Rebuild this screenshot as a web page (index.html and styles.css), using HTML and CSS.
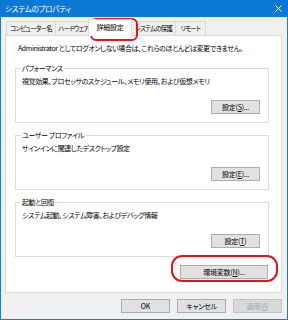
FILE: index.html
```html
<!DOCTYPE html>
<html lang="ja">
<head>
    <meta charset="UTF-8">
    <meta name="viewport" content="width=device-width, initial-scale=1.0">
    <title>システムのプロパティ</title>
    <link rel="stylesheet" href="styles.css">
</head>
<body>
    <div class="window">
        <div class="titlebar">
            <span>システムのプロパティ</span>
            <svg class="close" width="7" height="7" viewBox="0 0 7 7">
                <path d="M0.5 0.5 L6.5 6.5 M6.5 0.5 L0.5 6.5" stroke="#fff" stroke-width="1"/>
            </svg>
        </div>
        <div class="body">
            <div class="tabs">
                <div class="tab tab-name">コンピューター名</div>
                <div class="tab tab-hw">ハードウェア</div>
                <div class="tab tab-adv active">詳細設定</div>
                <div class="tab tab-prot">システムの保護</div>
                <div class="tab tab-remote">リモート</div>
            </div>
            <div class="panel">
                <p class="intro">Administrator としてログオンしない場合は、これらのほとんどは変更できません。</p>

                <div class="group">
                    <div class="group-title">パフォーマンス</div>
                    <p class="desc">視覚効果、プロセッサのスケジュール、メモリ使用、および仮想メモリ</p>
                    <div class="actions"><button class="btn">設定(<u>S</u>)...</button></div>
                </div>

                <div class="group">
                    <div class="group-title">ユーザー プロファイル</div>
                    <p class="desc">サインインに関連したデスクトップ設定</p>
                    <div class="actions"><button class="btn">設定(<u>E</u>)...</button></div>
                </div>

                <div class="group">
                    <div class="group-title">起動と回復</div>
                    <p class="desc">システム起動、システム障害、およびデバッグ情報</p>
                    <div class="actions"><button class="btn">設定(<u>T</u>)</button></div>
                </div>

                <div class="actions env">
                    <button class="btn wide">環境変数(<u>N</u>)...</button>
                </div>
            </div>
            <div class="footer">
                <button class="btn">OK</button>
                <button class="btn">キャンセル</button>
                <button class="btn" disabled>適用(<u>A</u>)</button>
            </div>
        </div>

        <div class="mark mark-tab"></div>
        <div class="mark mark-env"></div>
    </div>
</body>
</html>
```

FILE: styles.css
```css
body {
    margin: 0;
    font-family: "Noto Sans CJK JP", "Noto Sans", sans-serif;
    font-size: 7px;
    font-feature-settings: "palt";
    letter-spacing: -0.4px;
    color: #000;
}

.window {
    position: relative;
    width: 288px;
    height: 320px;
    box-sizing: border-box;
    border: 1px solid #1a7ad4;
    border-top: none;
    background: #f0f0f0;
}

.titlebar {
    height: 17px;
    margin: 0 -1px;
    padding: 0 6px 0 5px;
    background: #0c78d6;
    color: #fff;
    font-size: 7.5px;
    letter-spacing: -0.2px;
    display: flex;
    align-items: center;
    justify-content: space-between;
}

.body {
    padding: 4px 5px 0 4px;
}

.tabs {
    display: flex;
    height: 14px;
    padding-left: 1px;
    align-items: flex-end;
}

.tab {
    flex: none;
    height: 14px;
    box-sizing: border-box;
    border: 1px solid #d9d9d9;
    border-bottom: none;
    margin-right: -1px;
    font-size: 6.4px;
    letter-spacing: -0.7px;
    line-height: 13px;
    text-align: center;
    white-space: nowrap;
    overflow: hidden;
    background: #f0f0f0;
}

.tab-name { width: 50px; }
.tab-hw { width: 37px; }
.tab-adv { width: 39px; }
.tab-prot { width: 45px; }
.tab-remote { width: 31px; }

.tab.active {
    position: relative;
    z-index: 1;
    width: 44px;
    height: 17px;
    margin: 0 -1px -1px -3px;
    background: #fff;
    font-size: 7px;
    letter-spacing: -0.2px;
    line-height: 15px;
}

.panel {
    height: 258px;
    box-sizing: border-box;
    background: #fff;
    border: 1px solid #d9d9d9;
    padding: 7px 12px 0 9px;
}

.intro {
    margin: 0 0 15px 3px;
    line-height: 10px;
}

.group {
    height: 55px;
    box-sizing: border-box;
    border: 1px solid #dcdcdc;
    padding: 0 8px 0 6px;
    margin-bottom: 12px;
}

.group-title {
    width: fit-content;
    margin: -6px 0 0 -1px;
    padding: 0 1px;
    line-height: 10px;
    background: #fff;
}

.desc {
    margin: 3px 0 0;
    line-height: 10px;
}

.actions {
    display: flex;
    justify-content: flex-end;
    margin-top: 14px;
}

.actions.env {
    margin-top: -4px;
    padding-right: 1px;
}

.btn {
    width: 49px;
    height: 14px;
    padding: 0;
    border: 1px solid #adadad;
    background: #e1e1e1;
    font-family: inherit;
    font-size: 7px;
    font-feature-settings: "palt";
    letter-spacing: -0.2px;
    color: #000;
    line-height: 12px;
}

.btn.wide {
    width: 88px;
}

.btn:disabled {
    color: #a3a3a3;
    border-color: #c4c4c4;
    background: #d9d9d9;
}

.footer {
    display: flex;
    justify-content: flex-end;
    gap: 7px;
    margin-top: 6px;
}

.mark {
    position: absolute;
    border: 2.5px solid #e3141c;
    border-radius: 9px;
}

.mark-tab {
    left: 89px;
    top: 18px;
    width: 44px;
    height: 19px;
    border-radius: 6px;
}

.mark-env {
    left: 170px;
    top: 255px;
    width: 103px;
    height: 23px;
    border-radius: 11px;
}
```
